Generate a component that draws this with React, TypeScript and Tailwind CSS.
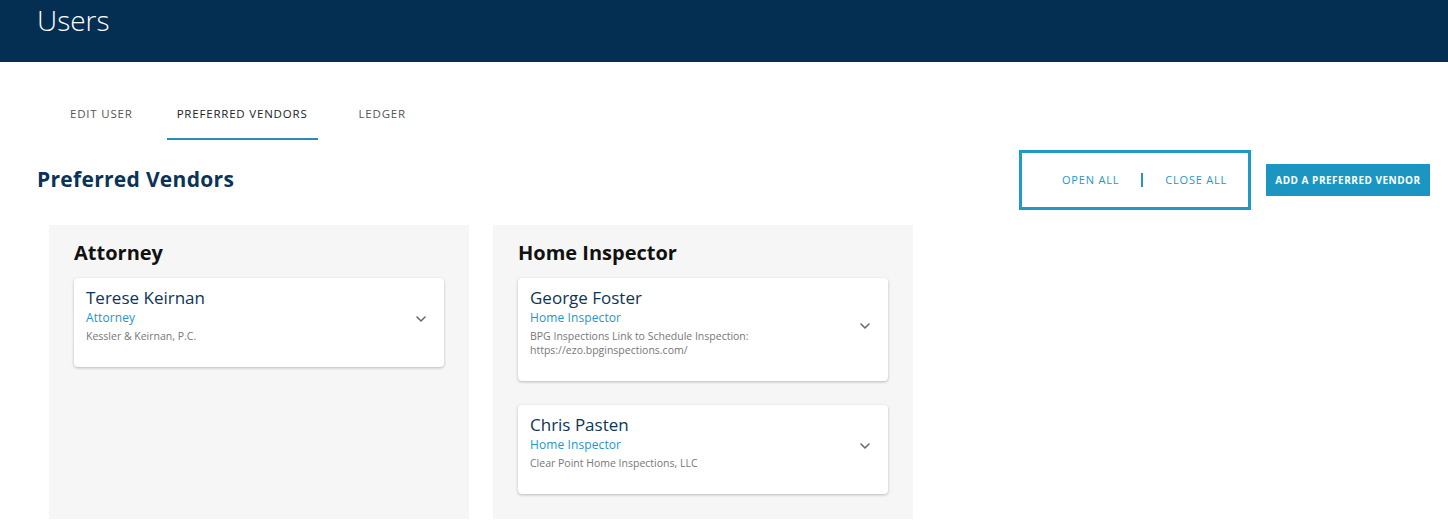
import React from 'react';

interface Vendor {
  name: string;
  role: string;
  company: string[];
}

interface Group {
  title: string;
  vendors: Vendor[];
}

const groups: Group[] = [
  {
    title: 'Attorney',
    vendors: [{ name: 'Terese Keirnan', role: 'Attorney', company: ['Kessler & Keirnan, P.C.'] }],
  },
  {
    title: 'Home Inspector',
    vendors: [
      {
        name: 'George Foster',
        role: 'Home Inspector',
        company: ['BPG Inspections Link to Schedule Inspection:', 'https://ezo.bpginspections.com/'],
      },
      { name: 'Chris Pasten', role: 'Home Inspector', company: ['Clear Point Home Inspections, LLC'] },
    ],
  },
];

const Chevron = () => (
  <svg width="12" height="8" viewBox="0 0 12 8" fill="none" stroke="#6b6b6b" strokeWidth="1.6" strokeLinecap="round" strokeLinejoin="round">
    <path d="M2 2l4 4 4-4" />
  </svg>
);

const VendorCard: React.FC<{ vendor: Vendor }> = ({ vendor }) => (
  <div className="flex items-center rounded bg-white pl-3 pr-[17px] pt-[9px] pb-[24px] shadow-[0_1px_3px_rgba(0,0,0,0.25)]">
    <div className="flex-1">
      <div className="text-[17px] leading-[22px] text-[#0e3556]">{vendor.name}</div>
      <div className="mt-[1px] text-[12px] leading-[16px] tracking-[0.1px] text-[#2596c8]">{vendor.role}</div>
      <div className="mt-[3px] text-[10.5px] leading-[14px] text-[#777]">
        {vendor.company.map(line => (
          <div key={line}>{line}</div>
        ))}
      </div>
    </div>
    <div className="mt-[8px]">
      <Chevron />
    </div>
  </div>
);

export default function App() {
  return (
    <div className="min-h-[525px] bg-white font-['Open_Sans',sans-serif]">
      <div className="h-[62px] bg-[#042f52] pl-[37px] pt-[2px]">
        <h1 className="text-[28px] font-light leading-[36px] text-white">Users</h1>
      </div>

      <div className="flex pl-[43px] pt-[38px] text-[11.5px] leading-[20px] tracking-[0.8px]">
        <div className="px-[27px] pt-[4px] pb-[14px] text-[#555]">EDIT USER</div>
        <div className="ml-[7px] mr-[14px] border-b-2 border-[#2a8ab8] px-[10px] pt-[4px] pb-[14px] text-[#222]">
          PREFERRED VENDORS
        </div>
        <div className="px-[27px] pt-[4px] pb-[14px] text-[#555]">LEDGER</div>
      </div>

      <div className="flex items-center justify-between pl-[37px] pr-[18px] pt-[10px]">
        <h2 className="text-[21px] font-bold tracking-[0.3px] text-[#0b3357]">Preferred Vendors</h2>
        <div className="flex items-center gap-[15px]">
          <div className="flex h-[60px] w-[232px] items-center gap-[22px] border-[3px] border-[#1f99c6] pl-[40px] text-[11px] tracking-[0.8px] text-[#2596c8]">
            <span>OPEN ALL</span>
            <span className="h-[14px] w-[2px] bg-[#2596c8]" />
            <span>CLOSE ALL</span>
          </div>
          <button className="h-[32px] w-[164px] bg-[#1b96c3] text-[10px] font-bold tracking-[0.5px] text-white">
            ADD A PREFERRED VENDOR
          </button>
        </div>
      </div>

      <div className="flex gap-[24px] pl-[49px] pt-[15px]">
        {groups.map(group => (
          <div key={group.title} className="flex h-[294px] w-[420px] flex-col bg-[#f6f6f6] px-[25px] pt-[15px]">
            <h3 className="text-[20px] font-bold leading-[26px] text-[#111]">{group.title}</h3>
            <div className="mt-[12px] flex flex-col gap-[24px]">
              {group.vendors.map(v => (
                <VendorCard key={v.name} vendor={v} />
              ))}
            </div>
          </div>
        ))}
      </div>
    </div>
  );
}
